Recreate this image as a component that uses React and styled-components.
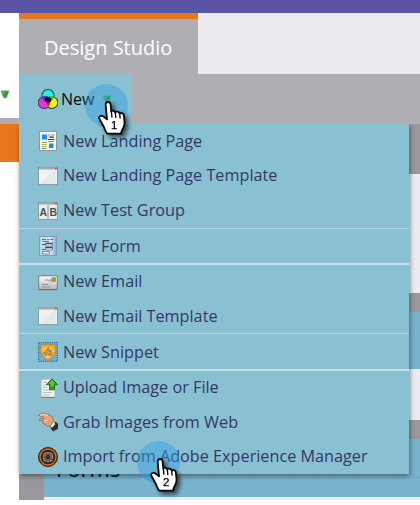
import React from 'react';
import styled, { createGlobalStyle } from 'styled-components';

const Global = createGlobalStyle`
  * { box-sizing: border-box; }
  body { margin: 0; background: #fff; font-family: "Open Sans", "Noto Sans", sans-serif; }
  svg { display: block; }
`;

const Page = styled.div`
  position: relative;
  width: 420px;
  height: 505px;
  overflow: hidden;
  display: flex;
  flex-direction: column;
  background: #fff;
`;
const TopBar = styled.div`height: 13px; flex: none; background: #5a54a4;`;
const Body = styled.div`display: flex; flex: 1; min-height: 0;`;
const Rail = styled.div`width: 19px; flex: none; display: flex; flex-direction: column;`;
const RailHead = styled.div`height: 105px; padding-top: 77px;`;
const Block = styled.div`height: ${p => p.$h}px; flex: none; background: ${p => p.$c};`;
const Main = styled.div`flex: 1; display: flex; flex-direction: column;`;
const TabBar = styled.div`height: 61px; flex: none; background: #edecf2;`;
const Tab = styled.div`
  width: 179px;
  height: 61px;
  padding: 3px 0 0 25px;
  display: flex;
  align-items: center;
  background: #afaeb3;
  border-top: 6px solid #e8771b;
  color: #fff;
  font-size: 20px;
  line-height: 28px;
  white-space: nowrap;
`;
const Toolbar = styled.div`height: 50px; flex: none; background: #afaeb3;`;
const NewButton = styled.div`
  width: 112px;
  height: 50px;
  padding-left: 19px;
  display: flex;
  align-items: center;
  background: #89c1d2;
  color: #080c10;
  font-size: 16px;
  & > span { width: 41px; margin-left: 3px; }
`;
const Canvas = styled.div`height: 376px; flex: none; background: #9a989d;`;
const Row = styled.div`
  height: ${p => p.$h}px;
  margin-left: 25px;
  background: ${p => p.$c};
`;
const FormsRow = styled(Row)`
  padding: 15px 0 0;
  color: #0d1419;
  font-size: 22px;
  line-height: 28px;
  & > div { height: 24px; border-bottom: 1px dashed #70a5bd; padding-left: 12px; }
`;
const Menu = styled.div`
  position: absolute;
  left: 19px;
  top: 124px;
  width: 390px;
  height: 350px;
  background: #89c1d2;
  box-shadow: 1px 2px 5px rgba(0, 0, 0, 0.45);
  clip-path: inset(0 -11px -11px -11px);
`;
const Item = styled.div`
  height: ${p => p.$h}px;
  padding-left: 19px;
  display: flex;
  align-items: center;
  gap: 5px;
  color: #343866;
  font-size: 16.23px;
  line-height: 22px;
  white-space: nowrap;
  & > svg { flex: none; }
`;
const Label = styled.span`margin-bottom: ${p => (p.$raised ? 1 : 0)}px;`;
const Divider = styled.div`
  height: ${p => p.$h}px;
  background: ${p => (p.$h === 2 ? '#cbdfe8' : '#b3d6e0')};
`;
const Halo = styled.div`
  position: absolute;
  left: ${p => p.$x}px;
  top: ${p => p.$y}px;
  width: 43px;
  height: 43px;
  border-radius: 50%;
  background: rgba(50, 158, 224, 0.45);
`;
const Pointer = styled.svg`
  position: absolute;
  left: ${p => p.$x}px;
  top: ${p => p.$y}px;
  filter: drop-shadow(3px 3px 2px rgba(0, 0, 0, 0.6));
  overflow: visible;
`;

const Arrow = () => (
  <svg width="10" height="9" viewBox="0 0 10 9">
    <path d="M.8.8h8.4L6.5 8h-3z" fill="#43a047" stroke="#8fc29b" strokeWidth=".5" />
    <path d="M2 1.3h6.5L6 7.3z" fill="#2e9440" />
    <path d="M2 1.5h3L4 5z" fill="#65b966" />
  </svg>
);

const Circles = () => (
  <svg width="20" height="20" viewBox="0 0 20 20">
    <circle cx="10" cy="6.7" r="6" fill="#24f0f0" />
    <circle cx="6.6" cy="13" r="6" fill="#fa22f4" />
    <circle cx="13.4" cy="13" r="6" fill="#faf526" />
    <path d="M4.5 8q2.500-2.400 5.500 0L8 13q-3.600-1.500-3.500-5" fill="#2945dd" />
    <path d="M15.500 8q-2.500-2.400-5.500 0l2 5q3.600-1.500 3.500-5" fill="#25cf3c" />
    <path d="M10 9q-5 4.500 0 8.700 5-4.200 0-8.700" fill="#ee2121" />
    <path d="m6.800 9 3.200-1.500L13.200 9l-.4 3.500L10 14l-2.800-1.500z" fill="#141414" />
    <path d="M4.200 8A6 6 0 1 1 15.800 8 5.900 5.900 0 1 1 10 18 5.900 5.900 0 1 1 4.200 8Z" fill="none" stroke="#3e4b51" strokeWidth="1.2" />
  </svg>
);

const Hand = ({ x, y, n }) => (
  <Pointer $x={x} $y={y} width="29" height="35" viewBox="0 0 29 35">
    <path
      d="M10.2 1C8.3 1 7.5 2.3 7.7 4L9 18.4 5.3 15.4C3.5 14 .9 15.2 1.1 17.2L6 26.2Q7 29.7 9.2 32.7H23.3Q23.2 30 25.2 27 26.7 24.7 26.5 21L25.8 14.2C25.5 11.7 22.5 11.5 21.6 12.6 21.3 10.4 18.4 10 17.2 11.3 16.6 9.6 14.6 9.2 13.3 10.3L12.6 3.5C12.5 1.8 11.7 1 10.2 1Z"
      fill="#fff" stroke="#080808" strokeWidth="1.8" strokeLinejoin="round"
    />
    <path d="m13.3 10 .6 6M17.3 11.5l.5 5M21.7 12.8l.4 4.2" fill="none" stroke="#080808" strokeWidth="1.4" strokeLinecap="round" />
    <text x="16.3" y="28.4" textAnchor="middle" fontFamily="Liberation Sans, sans-serif" fontSize="11.5" fill="#000" stroke="#000" strokeWidth=".25">{n}</text>
  </Pointer>
);

const LandingIcon = () => (
  <svg width="20" height="20" viewBox="0 0 20 20">
    <rect x="1.5" y=".5" width="17" height="19" fill="#f5f6f3" stroke="#92999c" />
    <path d="M4 3.5h5v5H4zM11 12.5h4.5V17H11z" fill="#278be2" />
    <path d="M10 4h2M13 4h3.5M10.5 6h3" stroke="#cf704c" strokeWidth="1.2" />
    <path d="M12 6.2h4M10 8.5h6.5" stroke="#39484d" strokeWidth="1.2" />
    <path d="M4 11.5h5M10 10.5h6" stroke="#86a44e" strokeWidth="1.2" />
    <path d="M4 13.5h4.5M4 15.5h5" stroke="#b3b250" strokeWidth="1" />
    <path d="M4 17.5h4.5" stroke="#6b9348" />
  </svg>
);

const WindowIcon = () => (
  <svg width="20" height="20" viewBox="0 0 20 20">
    <rect x=".5" y="1.5" width="19" height="17" fill="#eef2f2" stroke="#909a9e" />
    <path d="M1 2.5h18" stroke="#a4aeb4" strokeWidth="2" />
    <path d="M17 2.5h2" stroke="#df4c37" strokeWidth="1.6" />
    <path d="m2 17 14-13h2v14H2z" fill="#dde7e8" opacity=".7" />
  </svg>
);

const TestIcon = () => (
  <svg width="20" height="20" viewBox="0 0 20 20">
    <rect x=".5" y="1.5" width="19" height="17" fill="#e9ecec" stroke="#909a9e" />
    <path d="M1 2.5h18" stroke="#a0aaae" strokeWidth="2" />
    <path d="M17 2.5h2" stroke="#df4c37" strokeWidth="1.5" />
    <path d="M10 4v14" stroke="#a6adae" strokeWidth="1.4" />
    <g fontFamily="Liberation Sans, sans-serif" fontWeight="700" fontSize="10.5" fill="#4b5052">
      <text x="1.6" y="15.3">A</text><text x="11.4" y="15.3">B</text>
    </g>
  </svg>
);

const FormIcon = () => (
  <svg width="20" height="20" viewBox="0 0 20 20">
    <defs><linearGradient id="paper"><stop stopColor="#b4d5f0" /><stop offset=".65" stopColor="#d8e9f7" /><stop offset="1" stopColor="#64adee" /></linearGradient></defs>
    <rect x="1.5" y=".5" width="17" height="19" fill="url(#paper)" stroke="#8e9ba5" />
    <path d="M4 3.5h4M9 3.5h2M12 3.5h3M5 5.5h6" stroke="#4b7ca4" strokeWidth="1" />
    <path d="M4 8.5h3M4 13.5h3" stroke="#44617a" strokeWidth="1" />
    <path d="M7.5 7.5h7V10h-7zM7.5 11.5h7V14h-7zM4.5 15.5h7V18h-7z" fill="#eaf1f8" stroke="#647584" strokeWidth=".8" />
    <path d="M7.5 7.5h7M7.5 11.5h7" stroke="#3d4854" strokeWidth="1.3" />
  </svg>
);

const EmailIcon = () => (
  <svg width="20" height="20" viewBox="0 0 20 20">
    <defs><linearGradient id="envelope" x2="0" y2="1"><stop stopColor="#fafafa" /><stop offset="1" stopColor="#b8b8b8" /></linearGradient></defs>
    <rect x=".6" y="3.6" width="18.8" height="14" rx="1" fill="url(#envelope)" stroke="#85898a" strokeWidth="1.2" />
    <path d="M1 17.6h18" stroke="#6c7275" />
    <rect x="14" y="5.7" width="3.5" height="4" fill="#9da63d" stroke="#6f793a" strokeWidth=".5" />
    <path d="M7 8.5q2-1.5 3.5 0t3-1M11 8h3" fill="none" stroke="#99a0a0" />
    <path d="M4 12.5h6M4 15h8" stroke="#8e9191" strokeWidth="1.2" />
  </svg>
);

const SnippetIcon = () => (
  <svg width="20" height="20" viewBox="0 0 20 20">
    <rect x=".7" y=".7" width="18.6" height="18.6" fill="#70add1" stroke="#1e75b8" strokeWidth="1.3" strokeDasharray="1.2 1" />
    <path d="M3 2.5 7 3l3-1.2L13 3l4-.5 1 6q-.5 6-8 10-7.5-4-8-10z" fill="#f0a927" stroke="#b67722" strokeWidth=".7" />
    <path d="M9 6q-4 0-4 4.5M11 6q4 1 4 4M6.5 13q3.5 4 7 0" fill="none" stroke="#ffd16b" strokeWidth="1.5" />
    <path d="m10 5-1 4 4 1 1-2-2.5 0zM5 10h4l-1 4-1.5-1.5zM12 14l-2-2 4-1-.5 3z" fill="#68a2c5" stroke="#b67924" strokeWidth=".6" />
  </svg>
);

const UploadIcon = () => (
  <svg width="20" height="20" viewBox="0 0 20 20">
    <path d="M3 1h10l4 4v14.5H3z" fill="#f2f4f2" stroke="#a9afac" />
    <path d="M3 19.3h14" stroke="#6f7777" />
    <path d="M5 4.5h4M5 7h3M5 9.5h4M5 12h8M5 14.5h9M5 17h7" stroke="#b8beba" />
    <path d="m14 .7 5.5 6h-3v5h-5v-5h-3z" fill="#35a318" stroke="#226f19" strokeWidth="1" />
    <path d="m14 2 3 3.5h-1.5V8H13V5.5h-2z" fill="#64cc2f" />
  </svg>
);

const GrabIcon = () => (
  <svg width="20" height="20" viewBox="0 0 20 20">
    <path d="m13 13 4.5-3.2 2.5 2v5l-5 2.7-2.5-3.500z" fill="#2d3032" />
    <path d="m12.3 13 3.5-3 1.5 2-3.5 4z" fill="#f3eee9" />
    <path d="M.5 3.5Q3 .3 7 1.3L13 3.5Q15.8 6 15.3 9.5L12 14.5Q8.5 14.5 6 12L4.5 10.5 6 9 3 8.5 1 7.8 2 6.7 5.8 6.7 5.5 5z" fill="#dfa27a" stroke="#8f5e43" strokeWidth=".7" />
    <path d="M2 3.4q3-1.8 8 .3M6 9q3 0 4-2" fill="none" stroke="#f7ceac" strokeWidth="1.4" />
  </svg>
);

const ImportIcon = () => (
  <svg width="20" height="20" viewBox="0 0 20 20">
    <circle cx="10" cy="10" r="9.5" fill="#29231f" stroke="#30231c" />
    <circle cx="10" cy="10" r="8" fill="none" stroke="#e56a1d" strokeWidth="1.4" />
    <circle cx="10" cy="10" r="4.5" fill="none" stroke="#a88e7c" strokeWidth="1.6" strokeDasharray="2.3 .5" />
    <circle cx="10" cy="10" r="3" fill="#3a3029" stroke="#bda591" strokeWidth=".6" />
    <path d="m4.5 6.5 2 1M15.5 6.5l-2 1M5 14l2-1M15 14l-2-1" stroke="#8b7160" />
  </svg>
);

const groups = [
  {
    rule: 1,
    items: [
      { h: 34, Icon: LandingIcon, label: 'New Landing Page' },
      { h: 35, Icon: WindowIcon, label: 'New Landing Page Template', raised: true },
      { h: 35, Icon: TestIcon, label: 'New Test Group', raised: true },
    ],
  },
  { rule: 2, items: [{ h: 34, Icon: FormIcon, label: 'New Form' }] },
  {
    rule: 1,
    items: [
      { h: 33, Icon: EmailIcon, label: 'New Email', raised: true },
      { h: 35, Icon: WindowIcon, label: 'New Email Template' },
    ],
  },
  { rule: 2, items: [{ h: 35, Icon: SnippetIcon, label: 'New Snippet' }] },
  {
    rule: 0,
    items: [
      { h: 33, Icon: UploadIcon, label: 'Upload Image or File', raised: true },
      { h: 35, Icon: GrabIcon, label: 'Grab Images from Web' },
      { h: 35, Icon: ImportIcon, label: 'Import from Adobe Experience Manager', raised: true },
    ],
  },
];

export default function App() {
  return (
    <Page>
      <Global />
      <TopBar />
      <Body>
        <Rail>
          <RailHead><Arrow /></RailHead>
          <Block $h={6} $c="#afaeb3" />
          <Block $h={38} $c="#e8771b" />
        </Rail>
        <Main>
          <TabBar><Tab>Design Studio</Tab></TabBar>
          <Toolbar><NewButton><Circles /><span>New</span><Arrow /></NewButton></Toolbar>
          <Canvas>
            <Block $h={50} $c="#9a989d" />
            <Row $h={119} $c="#edecf2" />
            <Block $h={19} $c="#9a989d" />
            <Row $h={57} $c="#79b3ce" />
            <Row $h={51} $c="#edecf2" />
            <Block $h={19} $c="#9a989d" />
            <FormsRow $h={58} $c="#79b3ce"><div>Forms</div></FormsRow>
            <Row $h={3} $c="#edecf2" />
          </Canvas>
        </Main>
      </Body>
      <Menu>
        {groups.map((group, i) => (
          <React.Fragment key={i}>
            {group.items.map(({ h, Icon, label, raised }) => (
              <Item key={label} $h={h}><Icon /><Label $raised={raised}>{label}</Label></Item>
            ))}
            {group.rule > 0 && <Divider $h={group.rule} />}
          </React.Fragment>
        ))}
      </Menu>
      <Halo $x={85} $y={84} />
      <Hand x={98} y={101} n="1" />
      <Halo $x={137} $y={441} />
      <Hand x={150} y={458} n="2" />
    </Page>
  );
}
